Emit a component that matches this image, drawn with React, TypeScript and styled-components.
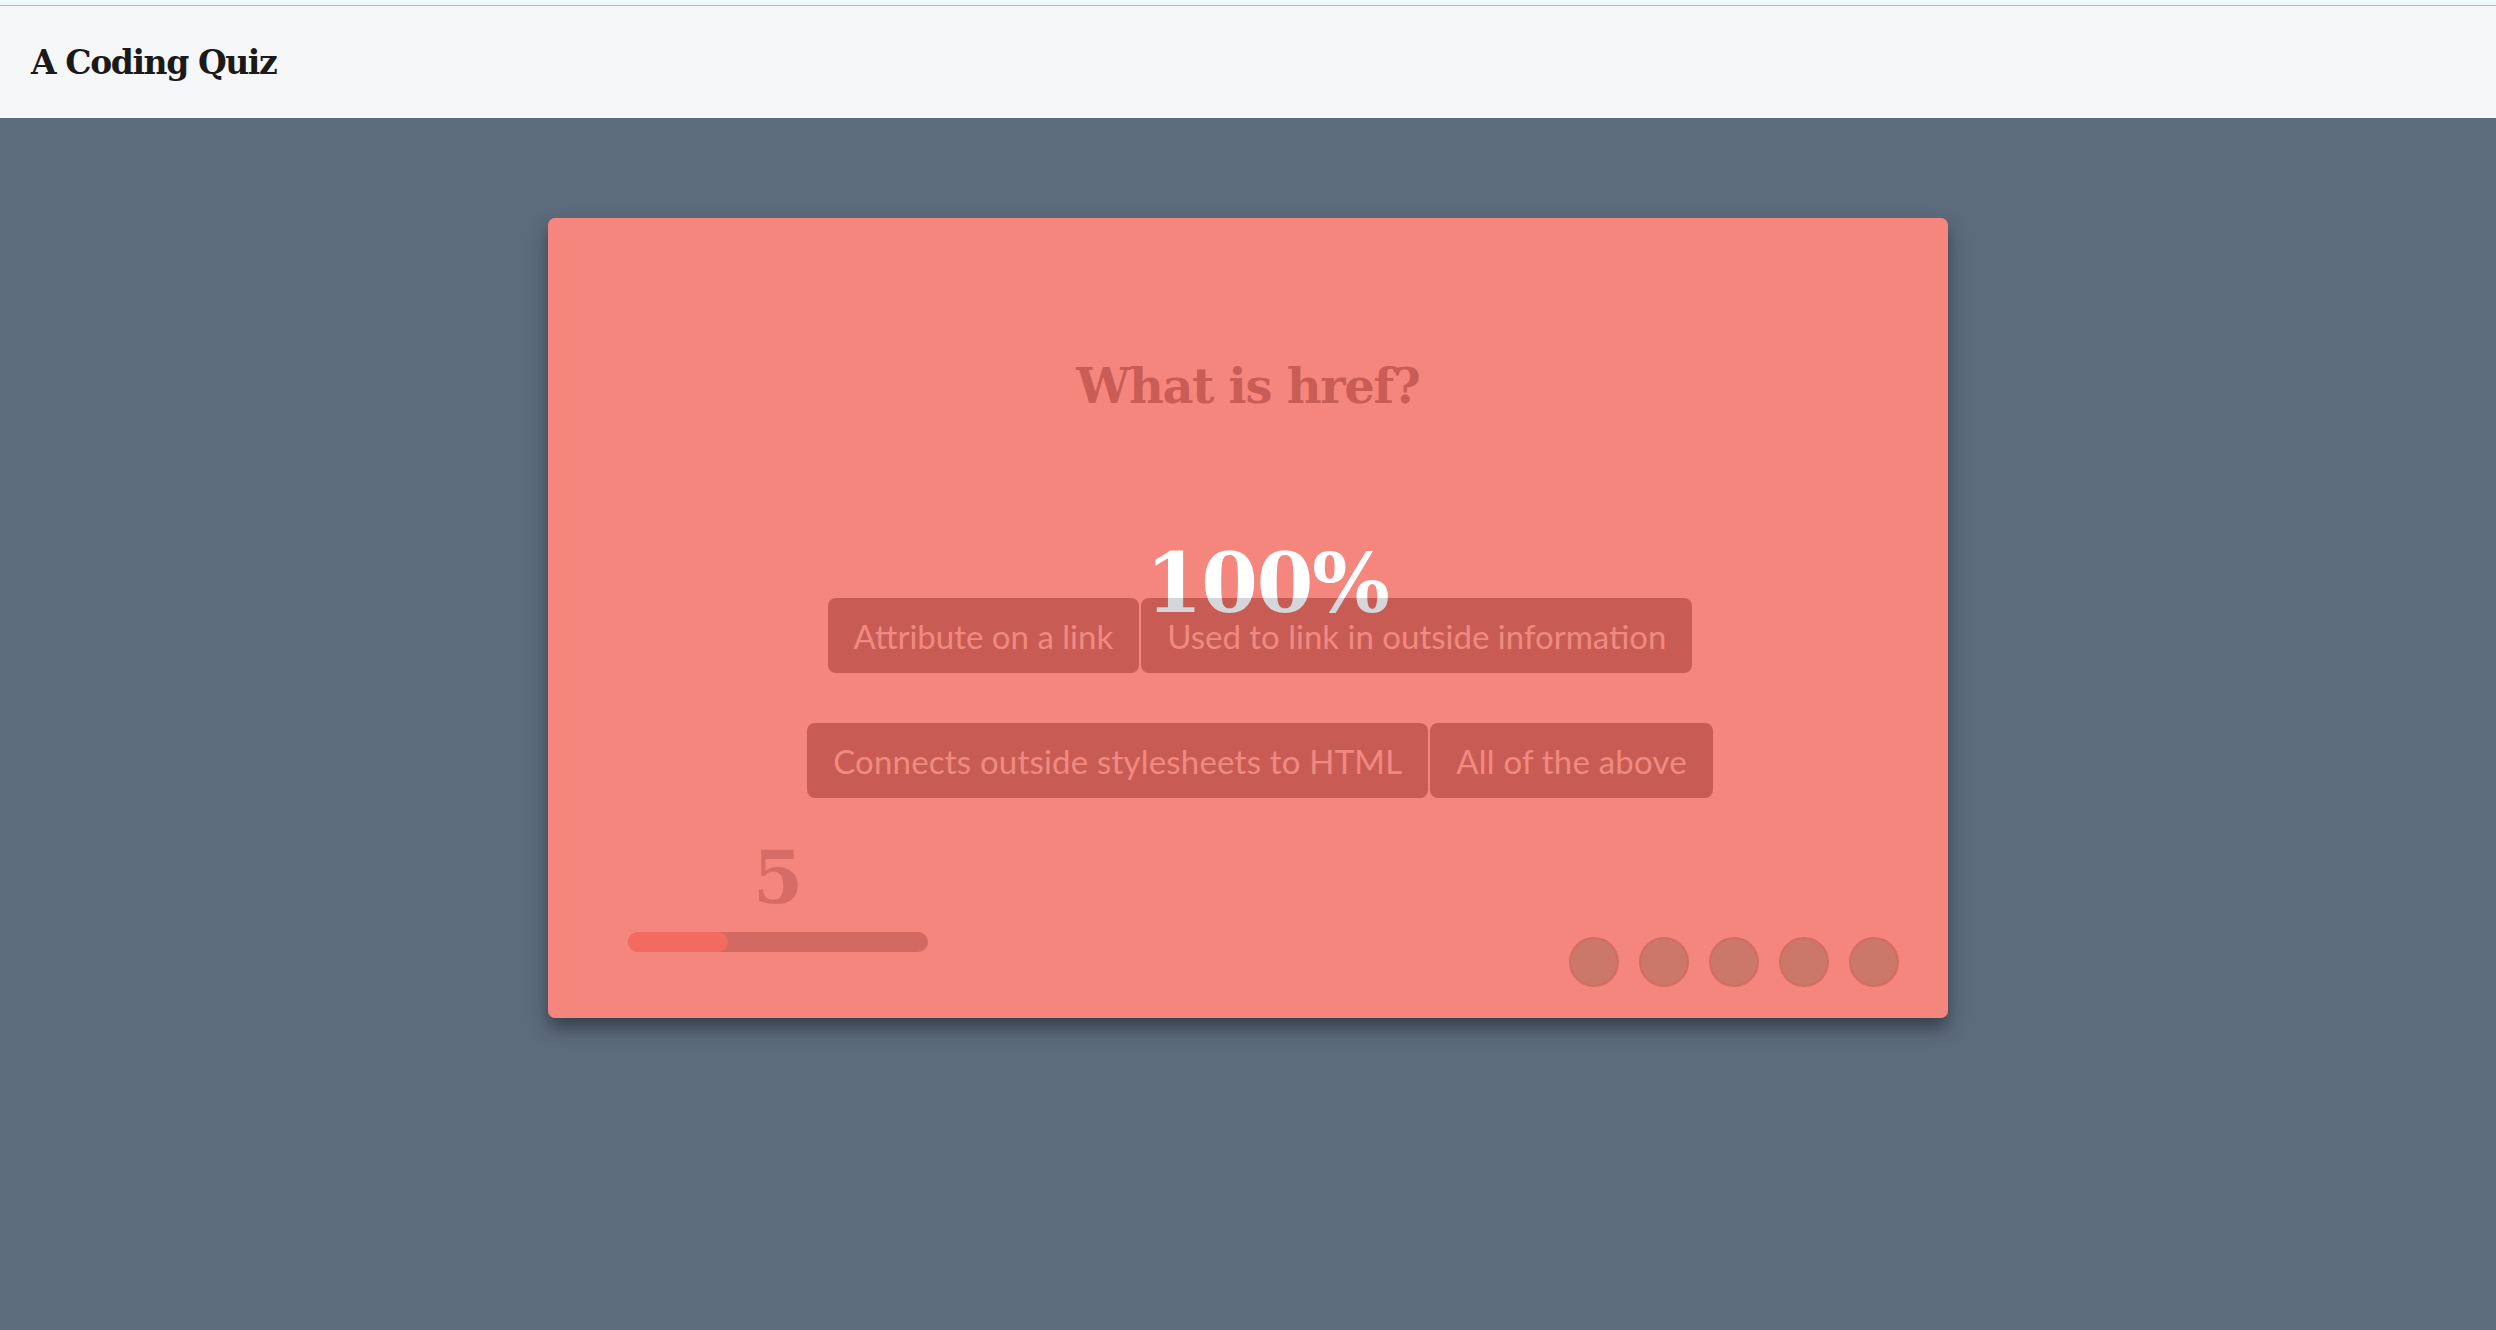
import React from 'react';
import styled, { createGlobalStyle } from 'styled-components';

const GlobalStyle = createGlobalStyle`
  html, body {
    margin: 0;
    padding: 0;
    background: #5d6c7c;
  }
  * {
    box-sizing: border-box;
  }
`;

const Page = styled.div`
  min-height: 1330px;
  background: #5d6c7c;
  display: flex;
  flex-direction: column;
`;

const TopStrip = styled.div`
  height: 5px;
  background: #eef8fa;
`;

const Header = styled.header`
  height: 113px;
  display: flex;
  align-items: center;
  padding-left: 31px;
  background: #f6f7f9;
  border-top: 1px solid #b6b9bc;
`;

const Title = styled.h1`
  margin: 0;
  font-family: 'DejaVu Serif', 'Liberation Serif', serif;
  font-weight: 700;
  font-size: 33px;
  letter-spacing: -1.4px;
  color: #1a1a1a;
`;

const Card = styled.section`
  width: 1400px;
  height: 800px;
  margin: 100px auto 0;
  padding: 0 49px 31px 49px;
  background: #f5867d;
  border-radius: 7px;
  box-shadow: 0 10px 18px rgba(20, 28, 38, 0.55);
  display: flex;
  flex-direction: column;
`;

const Question = styled.h2`
  margin: 139px 0 0;
  text-align: center;
  font-family: 'DejaVu Serif', 'Liberation Serif', serif;
  font-weight: 700;
  font-size: 48px;
  line-height: 58px;
  letter-spacing: -1.3px;
  color: #c95d56;
`;

const Answers = styled.div`
  position: relative;
  margin-top: 183px;
  padding-left: 24px;
  display: flex;
  flex-direction: column;
  align-items: center;
  gap: 50px;
`;

const AnswerRow = styled.div`
  display: flex;
  gap: 2px;
`;

const AnswerButton = styled.button<{ $wide?: boolean }>`
  height: 75px;
  padding: 0 26px;
  border: none;
  border-radius: 8px;
  background: #c85c55;
  color: #f08a80;
  font-family: Lato, 'Open Sans', sans-serif;
  font-size: 33px;
  font-weight: 400;
  letter-spacing: ${(p) => (p.$wide ? '0.2px' : '0')};
  cursor: pointer;
`;

const Score = styled.div`
  position: absolute;
  top: -56px;
  left: 50%;
  transform: translateX(-50%);
  margin-left: 19px;
  z-index: 2;
  font-family: 'DejaVu Serif', 'Liberation Serif', serif;
  font-weight: 700;
  font-size: 82px;
  line-height: 1;
  letter-spacing: -1.5px;
  background: linear-gradient(to bottom, #ffffff 56px, #d4d6d9 56px);
  -webkit-background-clip: text;
  background-clip: text;
  color: transparent;
  pointer-events: none;
`;

const Footer = styled.div`
  margin-top: auto;
  display: flex;
  justify-content: space-between;
  align-items: flex-end;
`;

const TimerBlock = styled.div`
  width: 300px;
  margin-left: 31px;
  padding-bottom: 35px;
  display: flex;
  flex-direction: column;
  align-items: center;
  gap: 18px;
`;

const TimerValue = styled.div`
  font-family: 'DejaVu Serif', 'Liberation Serif', serif;
  font-weight: 700;
  font-size: 72px;
  line-height: 1;
  color: #d76b65;
`;

const ProgressTrack = styled.div`
  width: 100%;
  height: 20px;
  border-radius: 10px;
  background: #d46963;
  overflow: hidden;
`;

const ProgressFill = styled.div`
  height: 100%;
  border-radius: 10px;
  background: #f26a60;
`;

const Dots = styled.div`
  display: flex;
  gap: 20px;
`;

const Dot = styled.span`
  width: 50px;
  height: 50px;
  border-radius: 50%;
  background: #cb786b;
  border: 2px solid #d26c65;
`;

const answers = [
  ['Attribute on a link', 'Used to link in outside information'],
  ['Connects outside stylesheets to HTML', 'All of the above'],
];

const App: React.FC = () => {
  const timeLeft = 5;
  const progress = 1 / 3;

  return (
    <>
      <GlobalStyle />
      <Page>
        <TopStrip />
        <Header>
          <Title>A Coding Quiz</Title>
        </Header>

        <Card>
          <Question>What is href?</Question>

          <Answers>
            <Score>100%</Score>
            {answers.map((row, i) => (
              <AnswerRow key={i}>
                {row.map((a) => (
                  <AnswerButton key={a} $wide={i === 1}>
                    {a}
                  </AnswerButton>
                ))}
              </AnswerRow>
            ))}
          </Answers>

          <Footer>
            <TimerBlock>
              <TimerValue>{timeLeft}</TimerValue>
              <ProgressTrack>
                <ProgressFill style={{ width: `${progress * 100}%` }} />
              </ProgressTrack>
            </TimerBlock>
            <Dots>
              {[0, 1, 2, 3, 4].map((d) => (
                <Dot key={d} />
              ))}
            </Dots>
          </Footer>
        </Card>
      </Page>
    </>
  );
};

export default App;
